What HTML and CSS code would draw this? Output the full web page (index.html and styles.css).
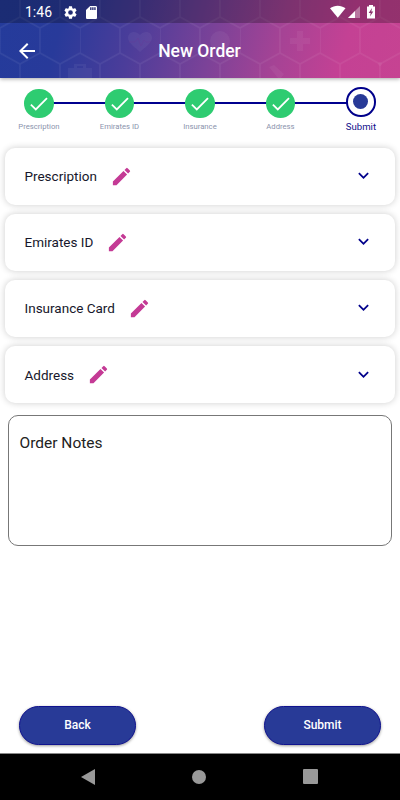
FILE: index.html
```html
<!DOCTYPE html>
<html lang="en">
<head>
<meta charset="utf-8">
<title>New Order</title>
<link rel="stylesheet" href="styles.css">
</head>
<body>
<svg class="defs" width="0" height="0">
  <symbol id="pencil" viewBox="0 0 24 24"><path d="M3 17.25V21h3.75L17.81 9.94l-3.75-3.75L3 17.25zM20.71 7.04a1 1 0 0 0 0-1.41l-2.34-2.34a1 1 0 0 0-1.41 0l-1.83 1.83 3.75 3.75 1.83-1.83z"/></symbol>
  <symbol id="chevron" viewBox="0 0 24 24"><path d="M7.41 8.59 12 13.17l4.59-4.58L18 10l-6 6-6-6z"/></symbol>
  <symbol id="check" viewBox="0 0 30 30"><path d="M7 15.8l5 5L23.4 9.4" fill="none" stroke="#fff" stroke-width="1.8"/></symbol>
</svg>
<div class="screen">
  <header class="header">
    <svg class="pattern" width="400" height="78">
      <defs>
        <pattern id="hex" width="80" height="72" patternUnits="userSpaceOnUse">
          <path d="M0 28v25l20 11 20-11V28L20 17 0 28M40 28l20-11 20 11M40 53l20 11 20-11M20-8v25M20 64v25M60-8v25M60 64v25" fill="none" stroke="#fff" stroke-opacity=".06" stroke-width="1.6"/>
        </pattern>
      </defs>
      <rect width="400" height="78" fill="url(#hex)"/>
      <g fill="#fff" fill-opacity=".05">
        <path d="M140 52c-4-4-12-9-12-14 0-7 8-8 12-3 4-5 12-4 12 3 0 5-8 10-12 14z"/>
        <path d="M297 31h6v7h7v6h-7v7h-6v-7h-7v-6h7z"/>
        <path d="M68 68h6v-4h12v4h6v10H68zM77 68h6v-2h-6z" fill-rule="evenodd"/>
        <circle cx="220" cy="41" r="10"/>
        <path d="M269 67l5-2 10 9-3 4h-3z"/>
        <circle cx="380" cy="64" r="2"/>
      </g>
      <path d="M129 42h6l3-4 3 8 3-6 2 2h5" fill="none" stroke="#643c99" stroke-opacity=".5"/>
    </svg>
    <div class="status">
      <span class="clock">1:46</span>
      <svg class="gear" width="13" height="13" viewBox="2 2 20 20"><path fill="#fff" d="M19.14 12.94c.04-.3.06-.61.06-.94 0-.32-.02-.64-.07-.94l2.03-1.58a.49.49 0 0 0 .12-.61l-1.92-3.32a.49.49 0 0 0-.59-.22l-2.39.96c-.5-.38-1.03-.7-1.62-.94l-.36-2.54a.48.48 0 0 0-.48-.41h-3.84c-.24 0-.43.17-.47.41l-.36 2.54c-.59.24-1.13.57-1.62.94l-2.39-.96a.48.48 0 0 0-.59.22L2.74 8.87c-.12.21-.08.47.12.61l2.03 1.58c-.05.3-.09.63-.09.94s.02.64.07.94l-2.03 1.58a.49.49 0 0 0-.12.61l1.92 3.32c.12.22.37.29.59.22l2.39-.96c.5.38 1.03.7 1.62.94l.36 2.54c.05.24.24.41.48.41h3.84c.24 0 .44-.17.47-.41l.36-2.54c.59-.24 1.13-.56 1.62-.94l2.39.96c.22.08.47 0 .59-.22l1.92-3.32a.48.48 0 0 0-.12-.61l-2.01-1.58zM12 15.6a3.6 3.6 0 1 1 0-7.2 3.6 3.6 0 0 1 0 7.2z"/></svg>
      <svg class="sd" width="11" height="13" viewBox="4 2 16 20" preserveAspectRatio="none"><path fill="#fff" d="M18 2h-8L4 8v12c0 1.100.9 2 2 2h12c1.100 0 2-.9 2-2V4c0-1.100-.9-2-2-2zm-6 6h-2V4h2v4zm3 0h-2V4h2v4zm3 0h-2V4h2v4z"/></svg>
      <svg class="signals" width="45" height="14">
        <path d="M0 3.300C4.500-.1 11-.1 15.500 3.300L7.800 12.700z" fill="#fff"/>
        <path d="M30 1v12H18z" fill="#fff" fill-opacity=".35"/><path d="M25 6v7h-7z" fill="#fff"/>
        <path d="M37 1.500h2V0h4v1.500h2v12h-8z" fill="#fff"/><path d="M42 3l-3.300 5h2l-.7 3.500 3.300-5h-2z" fill="#8a326d"/>
      </svg>
    </div>
    <div class="appbar">
      <svg class="arrow" width="24" height="24" viewBox="0 0 24 24"><path fill="#fff" d="M20 11H7.830l5.590-5.590L12 4l-8 8 8 8 1.410-1.410L7.830 13H20z"/></svg>
      <h1>New Order</h1>
    </div>
  </header>
  <main>
    <div class="stepper">
      <div class="step"><span class="dot"><svg><use href="#check"/></svg></span><span class="label">Prescription</span></div>
      <div class="step"><span class="dot"><svg><use href="#check"/></svg></span><span class="label">Emirates ID</span></div>
      <div class="step"><span class="dot"><svg><use href="#check"/></svg></span><span class="label">Insurance</span></div>
      <div class="step"><span class="dot"><svg><use href="#check"/></svg></span><span class="label">Address</span></div>
      <div class="step current"><span class="dot"></span><span class="label">Submit</span></div>
    </div>
    <div class="cards">
      <section class="card"><span>Prescription</span><svg class="edit"><use href="#pencil"/></svg><svg class="chev"><use href="#chevron"/></svg></section>
      <section class="card"><span>Emirates ID</span><svg class="edit"><use href="#pencil"/></svg><svg class="chev"><use href="#chevron"/></svg></section>
      <section class="card"><span>Insurance Card</span><svg class="edit"><use href="#pencil"/></svg><svg class="chev"><use href="#chevron"/></svg></section>
      <section class="card"><span>Address</span><svg class="edit"><use href="#pencil"/></svg><svg class="chev"><use href="#chevron"/></svg></section>
    </div>
    <div class="notes">Order Notes</div>
    <div class="actions"><button>Back</button><button>Submit</button></div>
  </main>
  <nav class="sysnav">
    <svg width="14" height="16"><path d="M14 0v16L0 8z"/></svg>
    <svg width="14" height="14"><circle cx="7" cy="7" r="7"/></svg>
    <svg width="15" height="15"><rect width="15" height="15" rx="1"/></svg>
  </nav>
</div>
</body>
</html>
```
FILE: styles.css
```css
* { box-sizing: border-box; }
body { margin: 0; font-family: Roboto, "Liberation Sans", sans-serif; background: #fff; }
.defs { position: absolute; }
.screen { width: 400px; height: 800px; display: flex; flex-direction: column; overflow: hidden; }
svg { display: block; flex: none; }

.header {
  position: relative; z-index: 1; height: 78px; flex: none; color: #fff;
  background: linear-gradient(105deg, #243b9b 0%, #283a9a 16%, #4c3d9a 34%, #7b4298 53%, #a54395 69%, #c44194 85%, #c64392 100%);
  box-shadow: 0 1px 4px rgba(0, 0, 0, .35);
}
.pattern { position: absolute; inset: 0; }
.status { position: relative; height: 23px; display: flex; align-items: center; padding: 1px 25px 0 25px; background: rgba(0, 0, 0, .25); }
.clock { width: 39px; font-size: 14px; line-height: 16px; font-weight: 400; }
.sd { margin-left: 9px; }
.signals { margin-left: auto; }
.appbar { position: relative; height: 55px; display: grid; grid-template-columns: 38px 1fr 38px; align-items: center; padding: 0 15px; }
.arrow { width: 24px; }
h1 { margin: 0 1px 0 0; font-size: 17.500px; font-weight: 500; text-align: center; line-height: 20px; }

main { flex: 1; display: flex; flex-direction: column; }
.stepper { height: 70px; display: flex; padding-top: 10px; margin: 0 -1.300px; }
.step { width: 80.500px; flex: none; display: flex; flex-direction: column; align-items: center; position: relative; }
.step + .step::before { content: ""; position: absolute; z-index: -1; top: 14px; right: 50%; width: 80px; height: 2px; background: #00008f; }
.dot { width: 29.500px; height: 29.500px; border-radius: 50%; background: #2ecc71; margin-top: .7px; }
.dot svg { width: 29.500px; height: 29.500px; }
.label { margin-top: 3.800px; font-size: 7.700px; line-height: 10px; color: #8b93ad; white-space: nowrap; }
.current .dot { display: grid; place-items: center; background: #fff; border: 2px solid #00008b; margin-top: -.8px; }
.current .dot::after { content: ""; width: 15px; height: 15px; border-radius: 50%; background: #283a97; }
.current .label { font-size: 9.600px; color: #10108c; margin-top: 5.200px; }

.cards { display: grid; gap: 9.600px; padding: 0 5px; }
.card {
  height: 56.500px; border-radius: 10px; background: #fff; display: flex; align-items: center;
  padding: 0 21px 0 19.500px; box-shadow: 0 0 7px rgba(0, 0, 0, .2);
  font-size: 13.500px; color: #17172b;
}
.edit { width: 23px; height: 23px; margin-left: 13px; fill: #c43a95; }
.chev { width: 21px; height: 21px; margin-left: auto; margin-bottom: 1px; fill: #00008b; }
.notes { margin: 12px 8px 0; height: 131px; border: 1px solid #777; border-radius: 10px; padding: 17px 11px; font-size: 15.500px; line-height: 20px; color: #222; text-indent: -.5px; }
.actions { margin-top: auto; display: flex; justify-content: space-between; padding: 0 19px 8px; }
button { width: 117px; height: 39px; padding: 0 0 1px; border: 1px solid #10138f; border-radius: 20px; background: #283a97; color: #fff; font: 500 12px Roboto, "Liberation Sans", sans-serif; box-shadow: 0 1px 3px rgba(0, 0, 0, .4); }
.sysnav { height: 47px; flex: none; background: #000; border-top: 1px solid #888; display: flex; align-items: center; justify-content: space-between; padding: 0 82px 1px 81px; fill: #999; }
```
